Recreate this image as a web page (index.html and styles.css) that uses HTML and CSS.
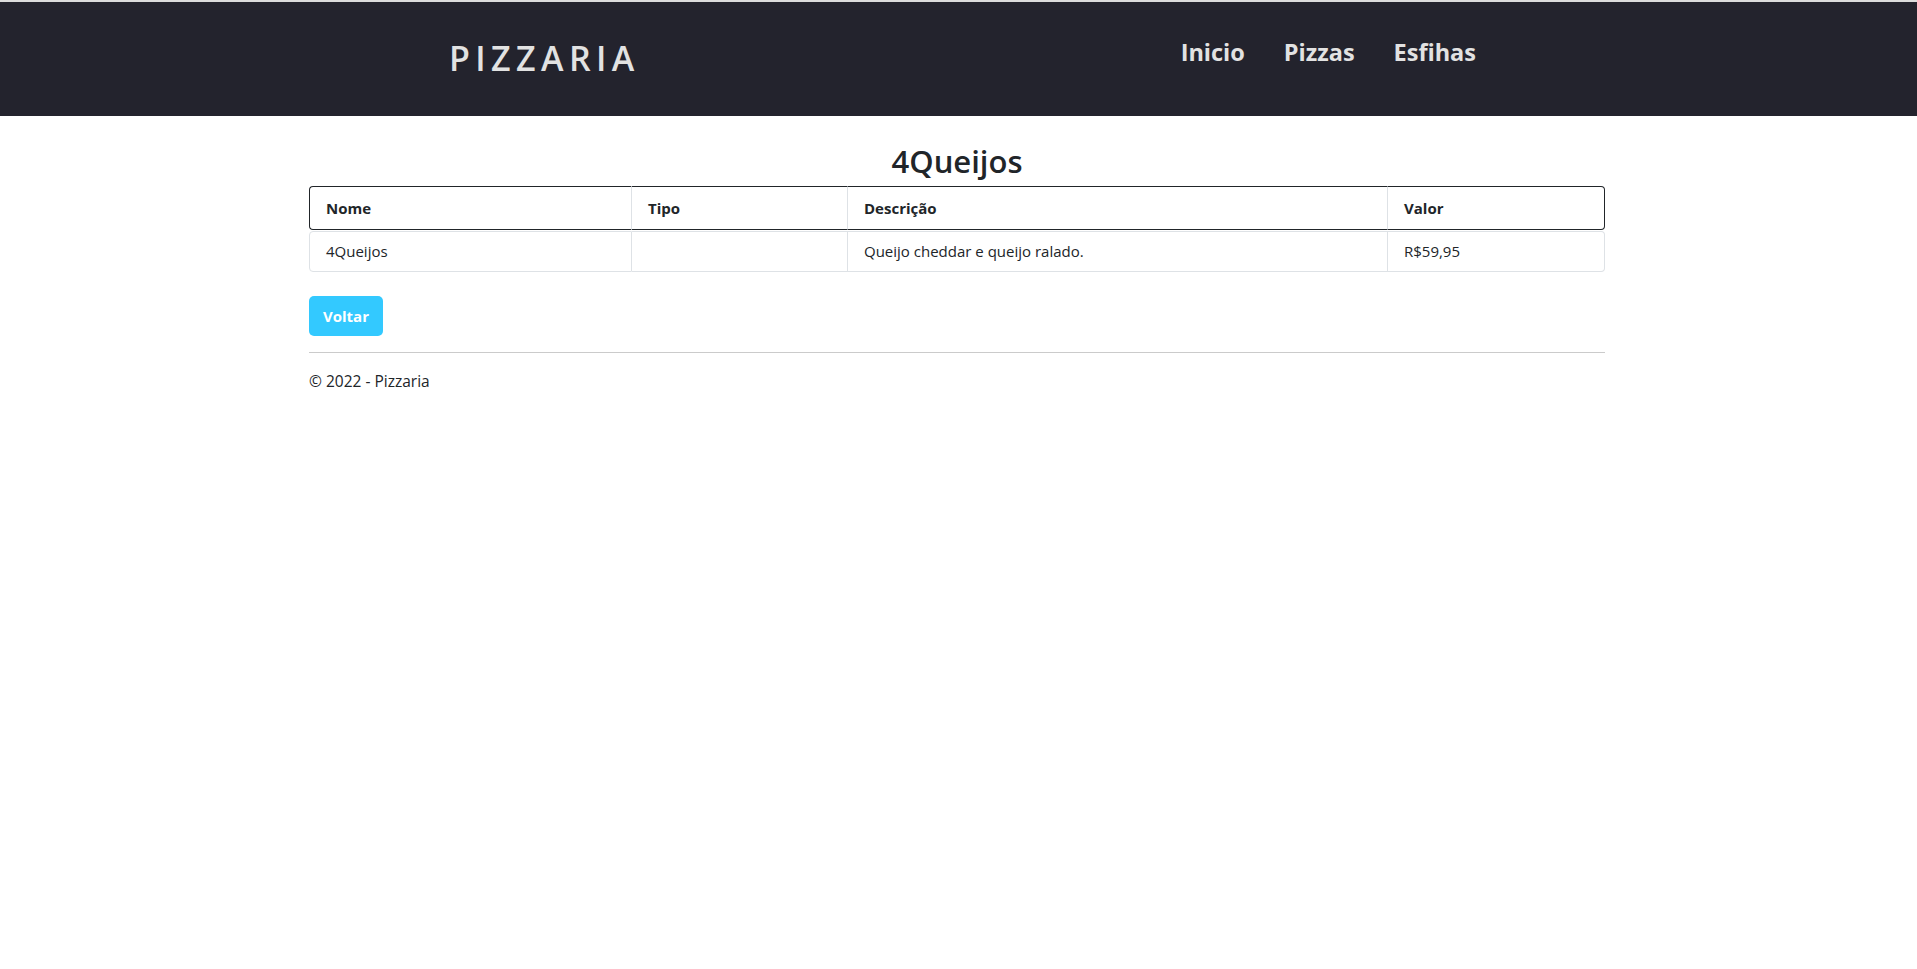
FILE: index.html
```html
<!DOCTYPE html>
<html lang="pt-BR">
<head>
<meta charset="utf-8">
<title>4Queijos - Pizzaria</title>
<link rel="stylesheet" href="styles.css">
</head>
<body>
<header class="topbar">
  <a class="brand" href="#">PIZZARIA</a>
  <nav class="nav">
    <a class="nav-link" href="#">Inicio</a>
    <a class="nav-link" href="#">Pizzas</a>
    <a class="nav-link" href="#">Esfihas</a>
  </nav>
</header>
<main class="container">
  <h2 class="title">4Queijos</h2>
  <table class="data-table">
    <colgroup>
      <col class="c-nome">
      <col class="c-tipo">
      <col class="c-desc">
      <col class="c-valor">
    </colgroup>
    <thead>
      <tr><th>Nome</th><th>Tipo</th><th>Descrição</th><th>Valor</th></tr>
    </thead>
    <tbody>
      <tr><td>4Queijos</td><td></td><td>Queijo cheddar e queijo ralado.</td><td>R$59,95</td></tr>
    </tbody>
  </table>
  <a class="btn-back" href="#">Voltar</a>
  <hr class="divider">
  <footer class="footer">© 2022 - Pizzaria</footer>
</main>
</body>
</html>
```
FILE: styles.css
```css
* { box-sizing: border-box; }
html, body { margin: 0; padding: 0; }
body {
  font-family: "Open Sans", "Noto Sans", sans-serif;
  font-size: 16px;
  line-height: 1.5;
  color: #212529;
  background: #fff;
}
a { text-decoration: none; }

.topbar {
  height: 116px;
  border-top: 2px solid #dcdcdc;
  background: #23232d;
  display: flex;
  align-items: center;
  justify-content: space-between;
  padding: 0 441px 0 449px;
}
.brand {
  color: #e2e2e2;
  font-size: 34px;
  font-weight: 600;
  letter-spacing: 5.4px;
  line-height: 1;
  padding-bottom: 3px;
}
.nav {
  display: flex;
  gap: 39px;
  padding-bottom: 14px;
}
.nav-link {
  color: #e2e2e2;
  font-size: 23.5px;
  font-weight: 700;
  line-height: 1.2;
}

.container {
  width: 1299px;
  padding-right: 3px;
  margin: 0 auto;
}
.title {
  font-size: 31px;
  font-weight: 600;
  line-height: 1.2;
  text-align: center;
  margin: 27px 0 6px;
}

.data-table {
  width: 100%;
  table-layout: fixed;
  border-collapse: separate;
  border-spacing: 0;
  margin-bottom: 24px;
}
.c-nome { width: 323px; }
.c-tipo { width: 216px; }
.c-desc { width: 540px; }
.c-valor { width: 217px; }

.data-table th {
  text-align: left;
  font-weight: 700;
  font-size: 15px;
  padding: 9px 16px;
  line-height: 24px;
  border-top: 1px solid #212529;
  border-bottom: 1px solid #212529;
  border-right: 1px solid #dee2e6;
}
.data-table th:first-child {
  border-left: 1px solid #212529;
  border-radius: 4px 0 0 4px;
}
.data-table th:last-child {
  border-right: 1px solid #212529;
  border-radius: 0 4px 4px 0;
}
.data-table tbody tr td {
  font-size: 15px;
  padding: 7px 16px 8px;
  line-height: 24px;
  border-top: 1px solid #dee2e6;
  border-bottom: 1px solid #dee2e6;
  border-right: 1px solid #dee2e6;
}
.data-table tbody::before {
  content: "";
  display: table-row;
  height: 1px;
}
.data-table td:first-child {
  border-left: 1px solid #dee2e6;
  border-radius: 4px 0 0 4px;
}
.data-table td:last-child {
  border-radius: 0 4px 4px 0;
}

.btn-back {
  display: inline-block;
  background: #33c9ff;
  color: #fff;
  font-weight: 700;
  font-size: 15px;
  line-height: 24px;
  padding: 8px 14px;
  border-radius: 5px;
}

.divider {
  border: 0;
  border-top: 1px solid #cbcbcb;
  margin: 16px 0;
}
.footer {
  font-size: 15.5px;
  line-height: 24px;
}
```
